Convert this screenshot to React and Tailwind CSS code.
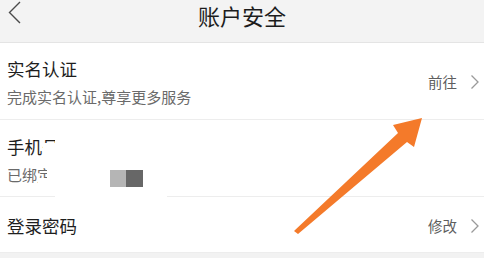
import React from 'react';

const font = { fontFamily: '"Noto Sans CJK SC", "Noto Sans", sans-serif' };

const Chevron = () => (
  <svg width="10" height="16" viewBox="0 0 10 16" className="ml-[13px]">
    <path d="M1.5 1.5 L8 8 L1.5 14.5" fill="none" stroke="#9a9a9a" strokeWidth="1.3" />
  </svg>
);

const Row = ({ title, sub, action, className = '' }) => (
  <div className={`flex items-center justify-between pl-[7px] pr-[4px] bg-white border-b border-[#ededed] ${className}`}>
    <div className="flex flex-col">
      <span className="text-[17.5px] leading-[22px] text-[#1e1e1e]">{title}</span>
      {sub && <span className="mt-[7px] text-[15px] leading-[19px] text-[#6a6a6a]">{sub}</span>}
    </div>
    {action && (
      <div className="flex items-center">
        <span className="text-[14.5px] text-[#5e5e5e]">{action}</span>
        <Chevron />
      </div>
    )}
  </div>
);

export default function App() {
  return (
    <div className="relative w-[484px] h-[258px] overflow-hidden bg-[#f2f2f2]" style={font}>
      {/* header */}
      <div className="relative h-[43px] bg-[#f3f3f3] border-b border-[#e4e4e4] flex justify-center">
        <svg width="14" height="24" viewBox="0 0 14 24" className="absolute left-[8px] top-[1px]">
          <path d="M12 1 L1.5 11.5 L12 22" fill="none" stroke="#4a4a4a" strokeWidth="1.4" />
        </svg>
        <span className="mt-[2px] text-[22px] leading-[26px] text-[#1c1c1c]">账户安全</span>
      </div>

      <Row title="实名认证" sub="完成实名认证,尊享更多服务" action="前往" className="h-[77px] pt-[2px]" />
      <Row title="手机号" sub="已绑定" className="h-[77px] pt-[4px]" />
      <Row title="登录密码" action="修改" className="h-[56px] pt-[2px]" />

      {/* mask over the phone row */}
      <div className="absolute left-[55px] top-[128px] w-[112px] h-[70px] bg-white" />
      <div className="absolute left-[43px] top-[143px] w-[14px] h-[14px] bg-white" />
      <div className="absolute left-[47px] top-[164px] w-[12px] h-[24px] bg-white" />
      <div className="absolute left-[38px] top-[178px] w-[12px] h-[10px] bg-white" />
      <div className="absolute left-[110px] top-[170px] flex">
        <div className="w-[16px] h-[17px] bg-[#b5b5b5]" />
        <div className="w-[17px] h-[17px] bg-[#676767]" />
      </div>

      {/* arrow */}
      <svg className="absolute left-0 top-0 pointer-events-none" width="484" height="258">
        <polygon
          points="422,118 393,125 398,133 294,231 298,234 407,142 414,147"
          fill="#f47a2a"
        />
      </svg>
    </div>
  );
}
